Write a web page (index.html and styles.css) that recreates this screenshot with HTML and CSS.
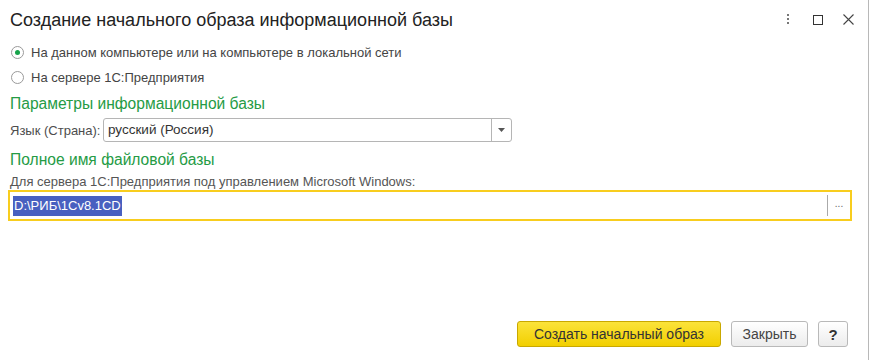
FILE: index.html
```html
<!DOCTYPE html>
<html lang="ru">
<head>
    <meta charset="UTF-8">
    <title>Создание начального образа информационной базы</title>
    <link rel="stylesheet" href="styles.css">
</head>
<body>
    <div class="window">
        <header class="title-bar">
            <h1>Создание начального образа информационной базы</h1>
            <div class="title-actions">
                <span class="tb-btn">
                    <svg width="4" height="12" viewBox="0 0 4 12"><rect x="1" y="0" width="2" height="2" fill="#777"/><rect x="1" y="4" width="2" height="2" fill="#777"/><rect x="1" y="8" width="2" height="2" fill="#777"/></svg>
                </span>
                <span class="tb-btn">
                    <svg width="10" height="10" viewBox="0 0 10 10"><rect x="0.5" y="0.5" width="9" height="9" fill="none" stroke="#333" stroke-width="1"/></svg>
                </span>
                <span class="tb-btn">
                    <svg width="11" height="11" viewBox="0 0 11 11"><path d="M0.5 0.5 L10.5 10.5 M10.5 0.5 L0.5 10.5" stroke="#444" stroke-width="1.1"/></svg>
                </span>
            </div>
        </header>

        <div class="content">
            <label class="radio">
                <span class="radio-mark checked"></span>
                На данном компьютере или на компьютере в локальной сети
            </label>
            <label class="radio">
                <span class="radio-mark"></span>
                На сервере 1С:Предприятия
            </label>

            <h2 class="group-title">Параметры информационной базы</h2>
            <div class="field-row">
                <span class="field-label">Язык (Страна):</span>
                <div class="combo">
                    <span class="combo-value">русский (Россия)</span>
                    <span class="combo-btn">
                        <svg width="7" height="4" viewBox="0 0 7 4"><path d="M0 0 H7 L3.5 4 Z" fill="#555"/></svg>
                    </span>
                </div>
            </div>

            <h2 class="group-title second">Полное имя файловой базы</h2>
            <div class="hint">Для сервера 1С:Предприятия под управлением Microsoft Windows:</div>
            <div class="path-input">
                <span class="path-value"><span class="selected">D:\РИБ\1Cv8.1CD</span></span>
                <span class="path-btn">...</span>
            </div>
        </div>

        <footer class="buttons">
            <button class="btn btn-primary">Создать начальный образ</button>
            <button class="btn btn-close">Закрыть</button>
            <button class="btn btn-help">?</button>
        </footer>
    </div>
</body>
</html>
```

FILE: styles.css
```css
html, body {
    margin: 0;
    padding: 0;
    background: #ffffff;
}
body {
    font-family: Arial, "Liberation Sans", sans-serif;
    color: #4d4d4d;
    font-size: 13px;
}
.window {
    width: 869px;
    height: 360px;
    border-right: 1px solid #b8b8b8;
    display: flex;
    flex-direction: column;
    box-sizing: border-box;
}
.title-bar {
    display: flex;
    align-items: center;
    justify-content: space-between;
    height: 39px;
    padding: 0 5px 0 10px;
}
.title-bar h1 {
    margin: 0;
    font-size: 18px;
    font-weight: normal;
    color: #222;
    padding-top: 1px;
}
.title-actions {
    display: flex;
    align-items: center;
}
.tb-btn {
    width: 30px;
    display: flex;
    justify-content: center;
    align-items: center;
}
.content {
    padding: 0 8px 0 10px;
    flex: 1;
}
.radio {
    display: flex;
    align-items: center;
    height: 25px;
    gap: 7px;
    color: #444;
}
.radio:first-child {
    margin-top: 1px;
}
.radio-mark {
    width: 13px;
    height: 13px;
    border: 1px solid #9a9a9a;
    border-radius: 50%;
    box-sizing: border-box;
    position: relative;
    margin-left: 1px;
}
.radio-mark.checked::after {
    content: "";
    position: absolute;
    left: 3px;
    top: 3px;
    width: 5px;
    height: 5px;
    border-radius: 50%;
    background: #16a34a;
}
.group-title {
    margin: 4px 0 0 0;
    font-size: 15.6px;
    font-weight: normal;
    color: #259b45;
    line-height: 20px;
}
.group-title.second {
    margin-top: 8px;
}
.field-row {
    display: flex;
    align-items: center;
    margin-top: 4px;
}
.field-label {
    width: 93px;
}
.combo {
    display: flex;
    width: 409px;
    height: 24px;
    border: 1px solid #b5b5b5;
    border-radius: 3px;
    box-sizing: border-box;
}
.combo-value {
    flex: 1;
    padding-left: 4px;
    line-height: 22px;
    color: #333;
    font-size: 13.5px;
}
.combo-btn {
    width: 19px;
    border-left: 1px solid #b5b5b5;
    display: flex;
    align-items: center;
    justify-content: center;
}
.hint {
    margin-top: 4px;
    line-height: 15px;
    font-size: 13px;
    color: #555;
}
.path-input {
    display: flex;
    align-items: center;
    margin: 1px 0 0 -2px;
    height: 31px;
    width: 844px;
    border: 2px solid #f8cd1e;
    box-sizing: border-box;
}
.path-value {
    flex: 1;
    padding-left: 3px;
}
.selected {
    background: #4860c0;
    color: #ffffff;
    padding: 2px 1px 3px 1px;
    font-size: 13px;
}
.path-btn {
    width: 22px;
    height: 21px;
    border-left: 1px solid #aaa;
    color: #666;
    font-size: 10px;
    line-height: 17px;
    text-align: center;
}
.buttons {
    display: flex;
    justify-content: flex-end;
    gap: 10px;
    padding: 0 20px 13px 0;
}
.btn {
    height: 26px;
    padding: 0;
    font-family: Arial, "Liberation Sans", sans-serif;
    font-size: 14px;
    color: #444;
    background: linear-gradient(#ffffff, #ececec);
    border: 1px solid #b9b9b9;
    border-radius: 3px;
}
.btn-primary {
    width: 204px;
    background: linear-gradient(#fbe33a, #f2cf00);
    border-color: #c9a800;
    color: #333;
}
.btn-close {
    width: 77px;
}
.btn-help {
    width: 30px;
    font-weight: bold;
    color: #333;
    font-size: 15px;
}
```
